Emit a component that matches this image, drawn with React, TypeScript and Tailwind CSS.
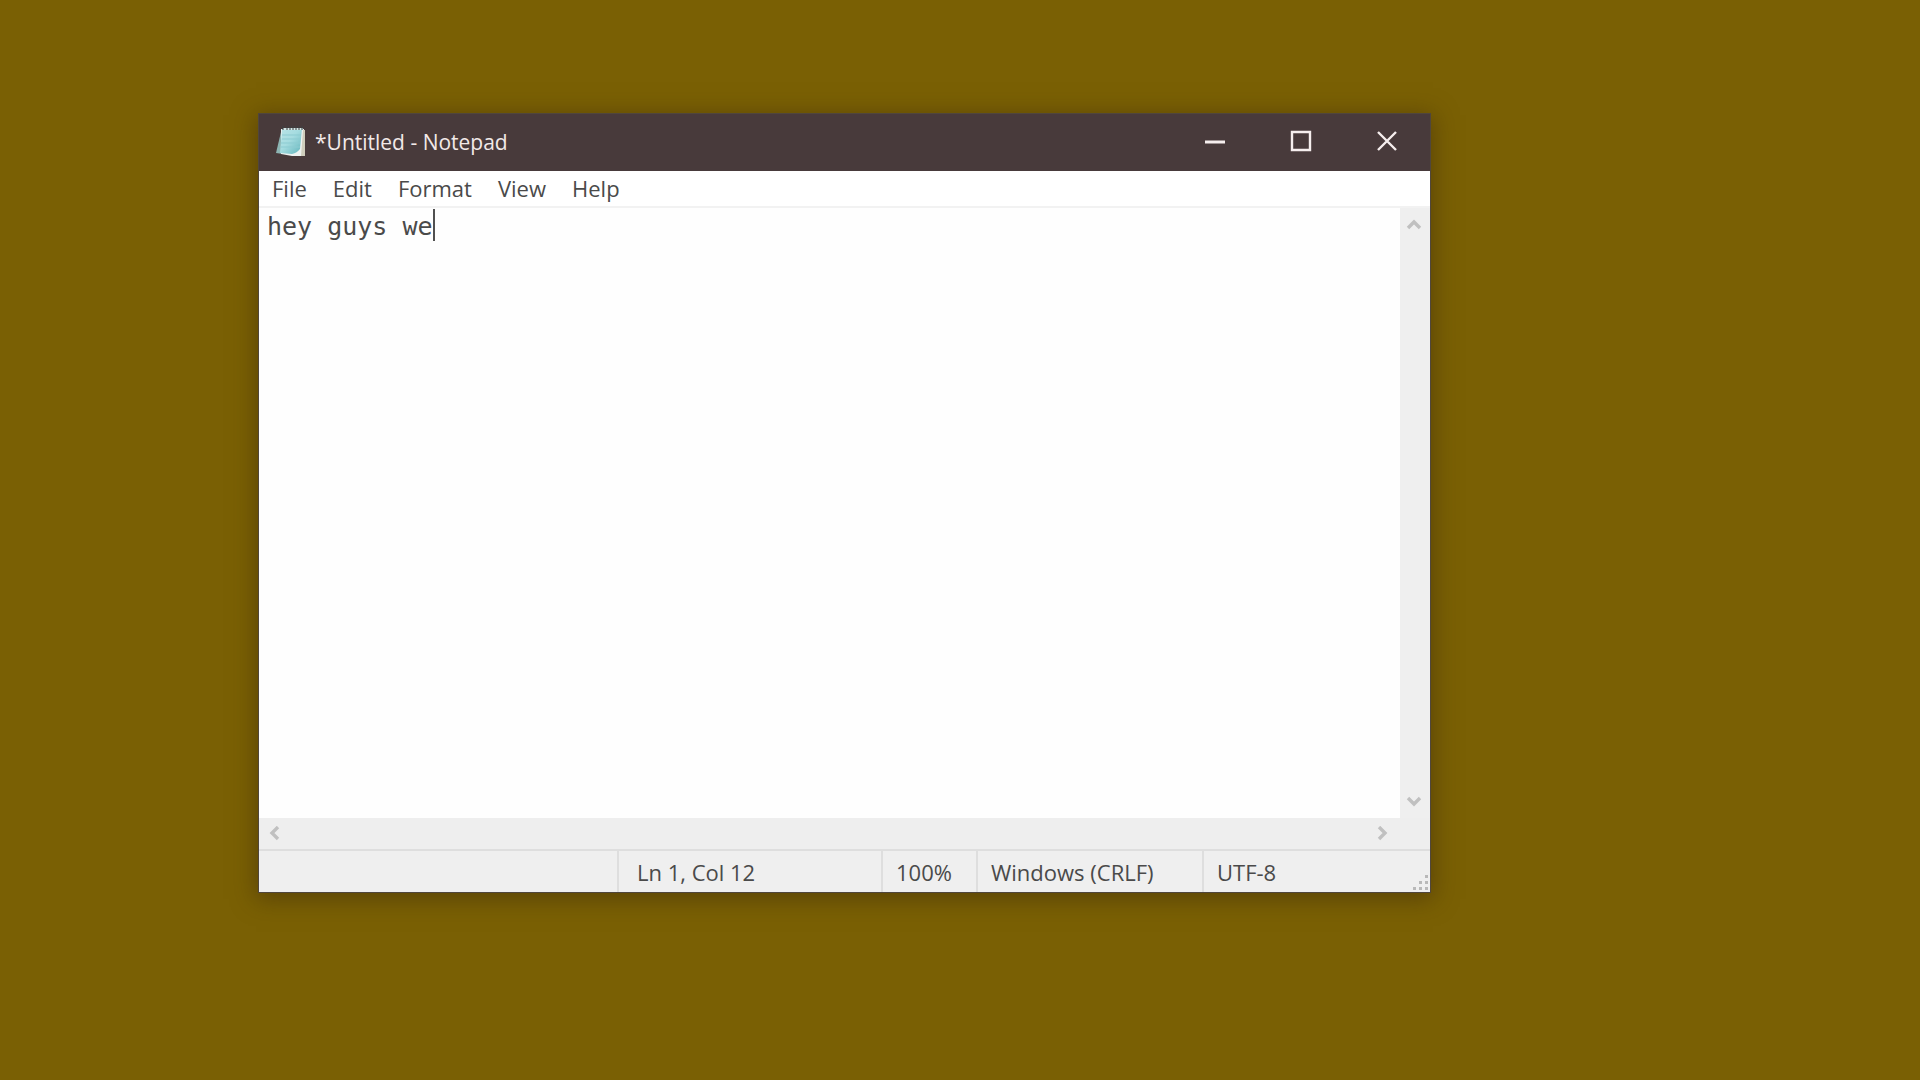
import { useState } from "react";
import type { ReactNode } from "react";

const MENUS = ["File", "Edit", "Format", "View", "Help"];

function NotepadIcon() {
  return (
    <svg width="32" height="32" viewBox="0 0 32 32" className="mb-1" aria-hidden="true">
      <defs>
        <linearGradient id="page" x1="0" y1="0" x2="1" y2="1">
          <stop offset="0" stopColor="#b9e3e6" />
          <stop offset="0.45" stopColor="#a5dce0" />
          <stop offset="1" stopColor="#62b4bb" />
        </linearGradient>
      </defs>
      <path d="M6 7 L1 28 L8 29 Z" fill="#8db5b3" />
      <path d="M6 4 H29 V31 H17 L6 29 Z" fill="#eef2f0" />
      <path d="M28 5 H30 V31 H26 Z" fill="#cfcdbc" />
      <path d="M7 4 H27 L25 24 Q22 28 17 29 L5 28 Z" fill="url(#page)" />
      <path d="M7 10H26M7 14H26M6 18H25M6 22H25" stroke="#8ccbd1" strokeWidth="1" />
      <path d="M8 4H28" stroke="#d5e9e8" strokeWidth="2" />
      <path
        d="M8 1V5M12 1V5M15 1V5M18 1V5M21 1V5M24 1V5M27 1V5"
        stroke="#3b4143"
        strokeWidth="1"
      />
    </svg>
  );
}

function CaptionButton({ label, children }: { label: string; children: ReactNode }) {
  return (
    <button
      type="button"
      aria-label={label}
      className="flex w-[86px] items-center justify-center pb-1 text-[#f6eeee]"
    >
      <svg width="22" height="22" viewBox="0 0 22 22" fill="none" stroke="currentColor" strokeWidth="2.4">
        {children}
      </svg>
    </button>
  );
}

function ScrollButton({ label, d, className }: { label: string; d: string; className: string }) {
  return (
    <button type="button" aria-label={label} className={"flex shrink-0 items-center justify-center " + className}>
      <svg width="16" height="16" viewBox="0 0 16 16" fill="none" stroke="#c0c0c0" strokeWidth="3.4">
        <path d={d} />
      </svg>
    </button>
  );
}

export default function App() {
  const [text, setText] = useState("hey guys we");

  return (
    <main className="flex h-screen bg-[#7a6004] pt-[113px] pr-[489px] pb-[187px] pl-[258px] font-['Open_Sans','Noto_Sans',sans-serif]">
      <section
        aria-label="Notepad"
        className="flex min-w-0 flex-1 flex-col border border-[#50463c] bg-white text-[22px] text-[#4a4a4a] shadow-[0_4px_22px_2px_rgba(60,40,10,0.5)]"
      >
        <header className="flex h-[57px] shrink-0 bg-[#483a3b]">
          <h1 className="flex flex-1 items-center gap-2 pl-4 text-[21px] font-medium text-[#f2e9e8]">
            <NotepadIcon />
            *Untitled - Notepad
          </h1>
          <CaptionButton label="Minimize">
            <path d="M1 12H21" strokeWidth="3" />
          </CaptionButton>
          <CaptionButton label="Maximize">
            <path d="M2 2H20V20H2Z" />
          </CaptionButton>
          <CaptionButton label="Close">
            <path d="M2 2L20 20M20 2L2 20" />
          </CaptionButton>
        </header>

        <nav
          aria-label="Menu bar"
          className="flex h-[37px] shrink-0 items-center border-b-2 border-[#f2f2f2]"
        >
          {MENUS.map((menu) => (
            <button key={menu} type="button" className="px-[13px]">
              {menu}
            </button>
          ))}
        </nav>

        <div className="flex min-h-0 flex-1">
          <div className="relative flex flex-1 font-['DejaVu_Sans_Mono',monospace] text-[25px] leading-8">
            <textarea
              aria-label="Text editor"
              spellCheck={false}
              value={text}
              onChange={(e) => setText(e.target.value)}
              className="flex-1 resize-none overflow-hidden bg-[#fefefe] pt-[3px] pl-2 outline-none"
            />
            <span
              aria-hidden="true"
              className="absolute top-px left-2 h-8 w-0.5 bg-[#505050]"
              style={{ marginLeft: `${text.length}ch` }}
            />
          </div>
          <div className="flex w-[30px] shrink-0 flex-col justify-between bg-[#efefef]">
            <ScrollButton label="Scroll up" d="M2 11L8 5L14 11" className="h-[34px] w-7" />
            <ScrollButton label="Scroll down" d="M2 5L8 11L14 5" className="h-[34px] w-7" />
          </div>
        </div>

        <div className="flex h-[31px] shrink-0 justify-between bg-[#eeeeee] pr-[30px]">
          <ScrollButton label="Scroll left" d="M11 1L5 7L11 13" className="w-8" />
          <ScrollButton label="Scroll right" d="M5 1L11 7L5 13" className="w-9" />
        </div>

        <footer className="relative flex h-[43px] shrink-0 border-t-2 border-[#dedede] bg-[#efefef] leading-[42px]">
          <span className="flex-1" />
          <span className="w-[264px] border-l-2 border-[#dedede] pl-[18px]">Ln 1, Col 12</span>
          <span className="w-[95px] border-l-2 border-[#dedede] pl-[13px]">100%</span>
          <span className="w-[226px] border-l-2 border-[#dedede] pl-[13px]">Windows (CRLF)</span>
          <span className="w-[228px] border-l-2 border-[#dedede] pl-[13px]">UTF-8</span>
          <svg className="absolute right-0.5 bottom-0.5" width="15" height="15" viewBox="0 0 15 15" fill="#b9b9b9" aria-hidden="true">
            <path d="M12 0h3v3h-3zM6 6h3v3h-3zM12 6h3v3h-3zM0 12h3v3h-3zM6 12h3v3h-3zM12 12h3v3h-3z" />
          </svg>
        </footer>
      </section>
    </main>
  );
}
